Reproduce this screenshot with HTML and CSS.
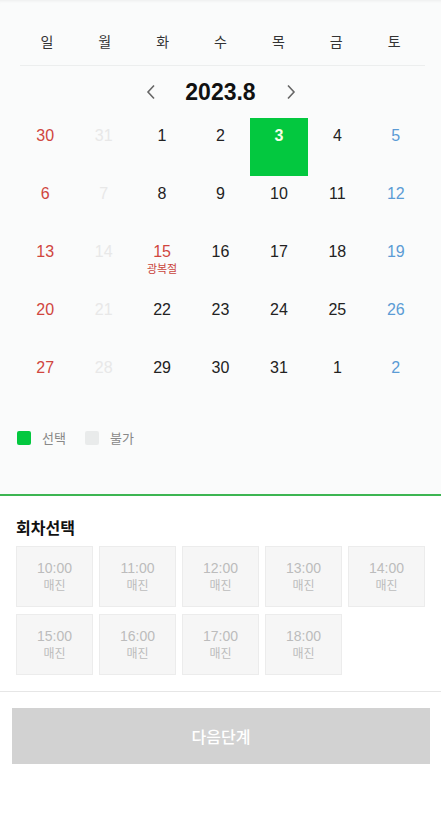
FILE: index.html
```html
<!DOCTYPE html>
<html lang="ko">
<head>
<meta charset="utf-8">
<link rel="stylesheet" href="styles.css">
</head>
<body>
<div class="calendar">
  <div class="weekdays">
    <span>일</span><span>월</span><span>화</span><span>수</span><span>목</span><span>금</span><span>토</span>
  </div>
  <div class="month-nav">
    <svg class="arrow" width="10" height="16" viewBox="0 0 10 16"><path d="M8 1.5 L2 8 L8 14.5" fill="none" stroke="#666" stroke-width="1.6"/></svg>
    <span class="month-title">2023.8</span>
    <svg class="arrow" width="10" height="16" viewBox="0 0 10 16"><path d="M2 1.5 L8 8 L2 14.5" fill="none" stroke="#666" stroke-width="1.6"/></svg>
  </div>
  <div class="days">
    <div class="day sun">30</div><div class="day off">31</div><div class="day">1</div><div class="day">2</div><div class="day selected">3</div><div class="day">4</div><div class="day sat">5</div>
    <div class="day sun">6</div><div class="day off">7</div><div class="day">8</div><div class="day">9</div><div class="day">10</div><div class="day">11</div><div class="day sat">12</div>
    <div class="day sun">13</div><div class="day off">14</div><div class="day sun">15<span class="holiday">광복절</span></div><div class="day">16</div><div class="day">17</div><div class="day">18</div><div class="day sat">19</div>
    <div class="day sun">20</div><div class="day off">21</div><div class="day">22</div><div class="day">23</div><div class="day">24</div><div class="day">25</div><div class="day sat">26</div>
    <div class="day sun">27</div><div class="day off">28</div><div class="day">29</div><div class="day">30</div><div class="day">31</div><div class="day">1</div><div class="day sat">2</div>
  </div>
  <div class="legend">
    <span class="swatch green"></span><span class="legend-label">선택</span>
    <span class="swatch gray"></span><span class="legend-label">불가</span>
  </div>
</div>
<div class="sessions">
  <h2 class="sessions-title">회차선택</h2>
  <div class="slots">
    <div class="slot"><span class="time">10:00</span><span class="status">매진</span></div>
    <div class="slot"><span class="time">11:00</span><span class="status">매진</span></div>
    <div class="slot"><span class="time">12:00</span><span class="status">매진</span></div>
    <div class="slot"><span class="time">13:00</span><span class="status">매진</span></div>
    <div class="slot"><span class="time">14:00</span><span class="status">매진</span></div>
    <div class="slot"><span class="time">15:00</span><span class="status">매진</span></div>
    <div class="slot"><span class="time">16:00</span><span class="status">매진</span></div>
    <div class="slot"><span class="time">17:00</span><span class="status">매진</span></div>
    <div class="slot"><span class="time">18:00</span><span class="status">매진</span></div>
  </div>
</div>
<div class="footer">
  <button class="next-btn">다음단계</button>
</div>
</body>
</html>
```

FILE: styles.css
```css
* { box-sizing: border-box; }
html, body { margin: 0; padding: 0; }
body {
  width: 441px;
  background: #fff;
  font-family: "Liberation Sans", "Noto Sans CJK KR", sans-serif;
  color: #222;
}
.calendar {
  background: #fafbfb;
  border-bottom: 2px solid #3db552;
  box-shadow: inset 0 3px 3px -2px rgba(0,0,0,0.06);
  padding: 20px 16px 0 16px;
  height: 496px;
}
.weekdays {
  display: grid;
  grid-template-columns: repeat(7, 1fr);
  height: 46px;
  align-items: center;
  border-bottom: 1px solid #eceeee;
  margin: 0 0 0 4px;
  font-family: "Noto Sans CJK KR", sans-serif;
  font-size: 14px;
  color: #333;
  padding-bottom: 4px;
}
.weekdays span { text-align: center; margin-left: -4px; }
.month-nav {
  height: 52px;
  display: flex;
  align-items: center;
  justify-content: center;
}
.arrow { display: block; margin: 0 26px; }
.month-title {
  font-size: 23px;
  font-weight: bold;
  color: #111;
  width: 78px;
  text-align: center;
}
.days {
  display: grid;
  grid-template-columns: repeat(7, 1fr);
  grid-auto-rows: 58px;
}
.day {
  display: flex;
  flex-direction: column;
  align-items: center;
  padding-top: 9px;
  font-size: 16px;
  line-height: 18px;
  color: #222;
}
.day.sun { color: #d0463e; }
.day.sat { color: #5b9bd5; }
.day.off { color: #e8e8e8; }
.day.selected {
  background: #03c83f;
  color: #f4ffe8;
  font-weight: bold;
}
.holiday {
  font-family: "Noto Sans CJK KR", sans-serif;
  font-size: 11px;
  line-height: 14px;
  color: #c9453c;
}
.legend {
  display: flex;
  align-items: center;
  margin-top: 20px;
  padding-left: 1px;
  font-family: "Noto Sans CJK KR", sans-serif;
  font-size: 13px;
  color: #888;
}
.swatch {
  width: 14px;
  height: 14px;
  border-radius: 2px;
  margin-right: 11px;
}
.swatch.green { background: #03c83f; }
.swatch.gray { background: #e9ebeb; }
.legend-label { margin-right: 19px; }
.sessions {
  padding: 21px 16px 16px 16px;
  border-bottom: 1px solid #e6e6e6;
}
.sessions-title {
  margin: 0 0 9px 0;
  font-family: "Noto Sans CJK KR", sans-serif;
  font-size: 16px;
  line-height: 20px;
  font-weight: bold;
  color: #111;
}
.slots {
  display: grid;
  grid-template-columns: repeat(5, 77px);
  column-gap: 6px;
  row-gap: 7px;
}
.slot {
  height: 61px;
  background: #f6f6f6;
  border: 1px solid #ececec;
  display: flex;
  flex-direction: column;
  align-items: center;
  justify-content: center;
  color: #bcbcbc;
}
.time { font-size: 14px; line-height: 17px; }
.status {
  font-family: "Noto Sans CJK KR", sans-serif;
  font-size: 12px;
  line-height: 16px;
}
.footer {
  padding: 16px 11px 0 12px;
  height: 133px;
}
.next-btn {
  width: 100%;
  height: 56px;
  border: none;
  background: #d2d2d2;
  color: #fff;
  font-family: "Noto Sans CJK KR", sans-serif;
  font-size: 16px;
  font-weight: 500;
  display: block;
}
```
